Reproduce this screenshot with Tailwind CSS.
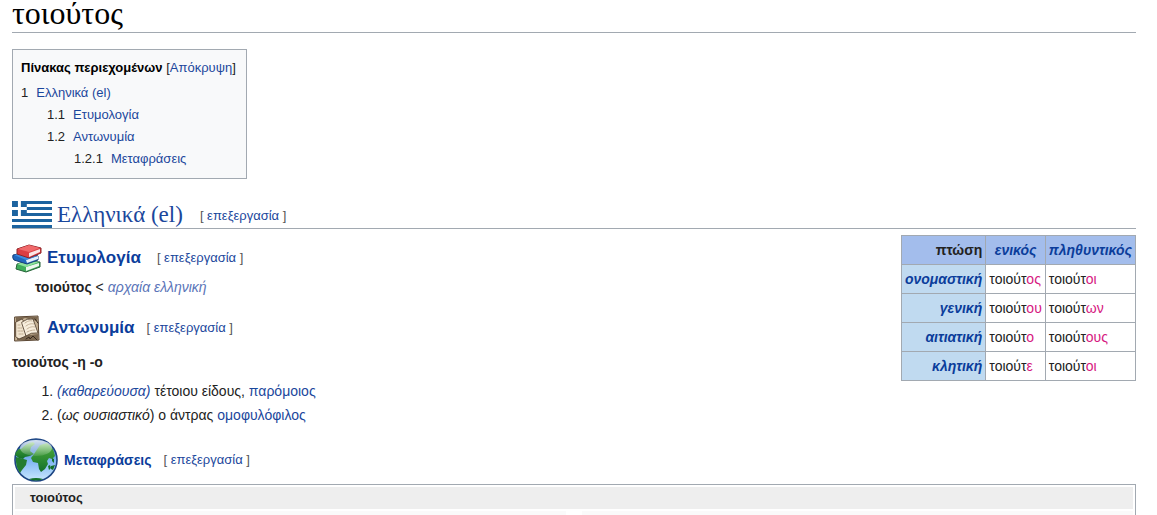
<!DOCTYPE html>
<html lang="el">
<head>
  <meta charset="UTF-8">
  <meta name="viewport" content="width=device-width, initial-scale=1.0">
  <title>τοιούτος</title>
  <script src="https://cdn.jsdelivr.net/npm/@tailwindcss/browser@4"></script>
</head>
<body class="bg-white font-['Liberation_Sans',Arial,sans-serif] text-sm leading-[22px] text-[#222222]">
  <main class="h-screen overflow-hidden pl-3 pr-[21px]">
    <h1 class="h-[33px] border-b border-[#a2a9b1] font-['Liberation_Serif',Georgia,serif] text-[32px] leading-[26px] text-black">τοιούτος</h1>

    <!-- Contents -->
    <nav class="mt-4 h-[130px] w-fit border border-[#a2a9b1] bg-[#f8f9fa] pt-[7px] pr-[10px] pl-2 text-[13px]">
      <div class="mb-[3px]">
        <h2 class="inline font-bold text-black">Πίνακας περιεχομένων</h2>
        <span>[<button type="button" class="text-[#1b479c]">Απόκρυψη</button>]</span>
      </div>
      <ul>
        <li>
          <a href="#el" class="text-[#1b479c]"><span class="mr-2 text-[#222222]">1</span>Ελληνικά (el)</a>
          <ul class="pl-[26px]">
            <li><a href="#etymologia" class="text-[#1b479c]"><span class="mr-2 text-[#222222]">1.1</span>Ετυμολογία</a></li>
            <li>
              <a href="#antonymia" class="text-[#1b479c]"><span class="mr-2 text-[#222222]">1.2</span>Αντωνυμία</a>
              <ul class="pl-[27px]">
                <li><a href="#metafraseis" class="text-[#1b479c]"><span class="mr-2 text-[#222222]">1.2.1</span>Μεταφράσεις</a></li>
              </ul>
            </li>
          </ul>
        </li>
      </ul>
    </nav>

    <!-- Greek -->
    <div class="mt-[22px] flex h-7 items-center border-b border-[#a2a9b1]">
      <svg class="mr-[5px] h-[27px] w-10" viewBox="0 0 27 18" preserveAspectRatio="none">
        <path fill="#fff" d="M0 0h27v18H0z" />
        <path stroke="#1c639f" stroke-width="2" d="M0 1h27M0 5h27M0 9h27M0 13h27M0 17h27" />
        <path fill="#1c639f" d="M0 0h10v10H0z" />
        <path stroke="#fff" stroke-width="2" d="M5 0v10M0 5h10" />
      </svg>
      <h2 id="el" class="font-['Liberation_Serif',Georgia,serif] text-[23px] leading-6 text-[#1b479c]"><a href="#el">Ελληνικά (el)</a></h2>
      <span class="ml-[17px] mt-[3px] text-[13px] text-[#555555]">[ <a href="#edit-el" class="text-[#1b479c]">επεξεργασία</a> ]</span>
    </div>

    <div class="flex items-start justify-between">
      <div>
        <div class="mt-[14px] flex h-[30px] items-center">
          <svg class="mr-1 h-[30px] w-[31px]" viewBox="0 0 31 30" stroke-linejoin="round">
            <path fill="#3fae5a" stroke="#28633a" d="M5 21l10-3 13 1v5l-14 5-10-3z" />
            <path fill="#eef8ee" d="M14 24l13-4v3l-13 5z" />
            <path fill="#8fe29d" d="M5 21l10-3 12 1-13 5z" />
            <path fill="#2168bd" stroke="#183f78" d="M1 12l15-3 10 4v4l-11 4L2 17q-2-2-1-5z" />
            <path fill="#e4f0fb" d="M14 17l12-4v3l-11 4z" />
            <path fill="#3d8de0" d="M2 12l13-3 10 4-11 4z" />
            <path fill="#dc3e43" stroke="#8d2428" d="M5 6l12-4 12 3v5l-12 5L5 11z" />
            <path fill="#fbe6e6" d="M17 10l11-4v3l-11 5z" />
            <path fill="#f0696b" d="M6 6l11-4 11 3-11 4z" />
          </svg>
          <h3 id="etymologia" class="text-[17px] font-bold text-[#0b3d9b]"><a href="#etymologia">Ετυμολογία</a></h3>
          <span class="ml-4 text-[13px] text-[#555555]">[ <a href="#edit-etymologia" class="text-[#1b479c]">επεξεργασία</a> ]</span>
        </div>
        <p class="mt-[3px] pl-[23px]"><b>τοιούτος</b> &lt; <a href="#archaia" class="italic text-[#5a74b8]">αρχαία ελληνική</a></p>

        <div class="mt-[15px] flex h-[30px] items-center">
          <svg class="ml-[2px] mr-[7px] h-[27px] w-[26px]" viewBox="0 0 26 27" stroke-linecap="round" stroke-linejoin="round">
            <path fill="#c7b396" stroke="#5a4633" d="M1 2l23-1 1 24-24 1z" />
            <path fill="#7c6850" d="M2 2h22l-1 4-12-3-9 4zM3 23l12-3 9-1v6H3z" />
            <path fill="#f1e4cf" stroke="#4a3828" stroke-width=".8" d="M2 7l6-3 3 4 1 13-7 3-3-2z" />
            <path fill="#f8eedd" stroke="#4a3828" stroke-width=".8" d="M8 7q5-4 11-3l5 14q-7-1-12 3L8 9z" />
            <path fill="none" stroke="#b5a084" stroke-width=".8" stroke-dasharray="2 1" d="M11 8q4-3 7-2M12 11q4-3 8-2M13 14q4-3 8-2M13 17q4-2 8-2M4 10h3M4 13h4M4 16h5M5 19h4" />
            <path fill="none" stroke="#35271b" d="M12 24l3-2 1 2 3-3 4 4M21 4l3 4" />
          </svg>
          <h3 id="antonymia" class="text-[17px] font-bold text-[#0b3d9b]"><a href="#antonymia">Αντωνυμία</a></h3>
          <span class="ml-3 text-[13px] text-[#555555]">[ <a href="#edit-antonymia" class="text-[#1b479c]">επεξεργασία</a> ]</span>
        </div>
        <p class="mt-2 font-bold">τοιούτος -η -ο</p>
        <ol class="mt-[6px] list-decimal pl-[45px] leading-6">
          <li><a href="#kathareuousa" class="italic text-[#1b479c]">(καθαρεύουσα)</a> τέτοιου είδους, <a href="#paromoios" class="text-[#1b479c]">παρόμοιος</a></li>
          <li>(<i>ως ουσιαστικό</i>) ο άντρας <a href="#omofylofilos" class="text-[#1b479c]">ομοφυλόφιλος</a></li>
        </ol>
      </div>

      <!-- Declension -->
      <table class="mt-[6px] border-collapse leading-5 [&_td]:border [&_td]:border-[#a2a9b1] [&_td]:px-[3px] [&_td]:py-1 [&_th]:border [&_th]:border-[#a2a9b1] [&_th]:px-[3px] [&_th]:py-1">
        <thead class="bg-[#a3bdec]">
          <tr>
            <th scope="col" class="text-right">πτώση</th>
            <th scope="col" class="italic text-[#0b3d9b]"><a href="#enikos">ενικός</a></th>
            <th scope="col" class="italic text-[#0b3d9b]"><a href="#plithyntikos">πληθυντικός</a></th>
          </tr>
        </thead>
        <tbody>
          <tr>
            <th scope="row" class="bg-[#c0daf0] text-right italic text-[#0b3d9b]"><a href="#onomastiki">ονομαστική</a></th>
            <td>τοιούτ<span class="text-[#d6187f]">ος</span></td>
            <td>τοιούτ<span class="text-[#d6187f]">οι</span></td>
          </tr>
          <tr>
            <th scope="row" class="bg-[#c0daf0] text-right italic text-[#0b3d9b]"><a href="#geniki">γενική</a></th>
            <td>τοιούτ<span class="text-[#d6187f]">ου</span></td>
            <td>τοιούτ<span class="text-[#d6187f]">ων</span></td>
          </tr>
          <tr>
            <th scope="row" class="bg-[#c0daf0] text-right italic text-[#0b3d9b]"><a href="#aitiatiki">αιτιατική</a></th>
            <td>τοιούτ<span class="text-[#d6187f]">ο</span></td>
            <td>τοιούτ<span class="text-[#d6187f]">ους</span></td>
          </tr>
          <tr>
            <th scope="row" class="bg-[#c0daf0] text-right italic text-[#0b3d9b]"><a href="#klitiki">κλητική</a></th>
            <td>τοιούτ<span class="text-[#d6187f]">ε</span></td>
            <td>τοιούτ<span class="text-[#d6187f]">οι</span></td>
          </tr>
        </tbody>
      </table>
    </div>

    <div class="mt-[11px] flex h-11 items-center">
      <svg class="ml-[2px] mr-[6px] size-11" viewBox="0 0 44 44">
        <defs>
          <linearGradient id="sea" x1="0" y1="0" x2="0" y2="1">
            <stop offset="0" stop-color="#3c72b8" />
            <stop offset=".5" stop-color="#7db4f2" />
            <stop offset="1" stop-color="#cbe9ff" />
          </linearGradient>
          <linearGradient id="land" x1="0" y1="0" x2="0" y2="1">
            <stop offset="0" stop-color="#4fae3c" />
            <stop offset="1" stop-color="#14702a" />
          </linearGradient>
          <linearGradient id="shine" x1="0" y1="0" x2="0" y2="1">
            <stop offset="0" stop-color="#fff" stop-opacity=".8" />
            <stop offset="1" stop-color="#fff" stop-opacity=".1" />
          </linearGradient>
        </defs>
        <circle cx="22" cy="22" r="21" fill="url(#sea)" stroke="#1d4583" stroke-width="1.6" />
        <path fill="url(#land)" d="M7 11Q12 5 19 4l2 2-4 3-1 4 4 3-4 2-5 1-2 2-4-1-4-3q1-4 4-6z" />
        <path fill="#247c2f" d="M2 19l4 1 7 2-1 5-4 5-2 3q-5-7-4-16z" />
        <path fill="url(#land)" d="M22 13l4-6 7-2q7 5 8 13l-3 3-3-1-2 3 1 3-3 5-4 3-2-3-1-6-5-1-2-4 3-4z" />
        <path fill="#14702a" d="M38 20l2 1v4l-2-2zM34 28l2-1 1 3-2 2zM37 28l4-1-2 5-2-1zM15 41q7-2 14 0-7 3-14 0z" />
        <ellipse cx="22" cy="10" rx="16" ry="8" fill="url(#shine)" />
      </svg>
      <h4 id="metafraseis" class="font-bold text-[#0b3d9b]"><a href="#metafraseis">Μεταφράσεις</a></h4>
      <span class="ml-3 text-[13px] text-[#555555]">[ <a href="#edit-metafraseis" class="text-[#1b479c]">επεξεργασία</a> ]</span>
    </div>

    <!-- Translations -->
    <section class="mt-[2px] border border-[#a2a9b1] p-[2px]">
      <h5 class="bg-[#eeeeee] pl-[15px] text-[13px] leading-[22px] font-bold">τοιούτος</h5>
      <div class="mt-[2px] grid grid-cols-2 gap-4">
        <div class="h-20 bg-[#fafafa]"></div>
        <div class="h-20 bg-[#fafafa]"></div>
      </div>
    </section>
  </main>
</body>
</html>
